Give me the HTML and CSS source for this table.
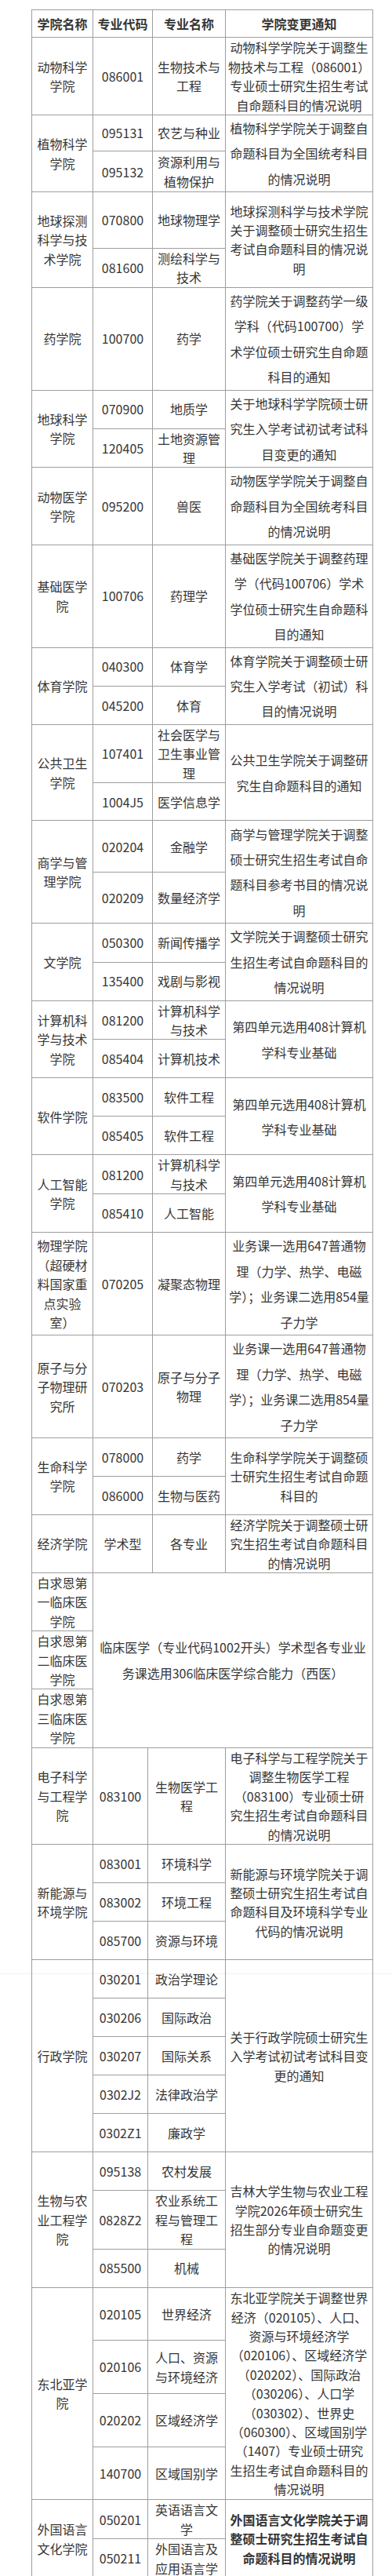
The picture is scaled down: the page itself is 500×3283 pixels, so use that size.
FILE: index.html
```html
<!DOCTYPE html>
<html lang="zh-CN">
<head>
<meta charset="utf-8">
<title>学院变更通知</title>
<link rel="stylesheet" href="styles.css">
</head>
<body>
<div class="page">
<table class="grid t1">
<colgroup><col class="w1"><col class="w2"><col class="w3"><col class="w4"></colgroup>
<thead>
<tr class="h35"><th>学院名称</th><th>专业代码</th><th>专业名称</th><th>学院变更通知</th></tr>
</thead>
<tbody>
<tr class="h98"><td>动物科学<br>学院</td><td>086001</td><td>生物技术与<br>工程</td><td>动物科学学院关于调整生<br>物技术与工程（086001）<br>专业硕士研究生招生考试<br>自命题科目的情况说明</td></tr>
<tr class="h46"><td rowspan="2">植物科学<br>学院</td><td>095131</td><td>农艺与种业</td><td rowspan="2" class="loose">植物科学学院关于调整自<br>命题科目为全国统考科目<br>的情况说明</td></tr>
<tr class="h52"><td>095132</td><td>资源利用与<br>植物保护</td></tr>
<tr class="h71"><td rowspan="2">地球探测<br>科学与技<br>术学院</td><td>070800</td><td>地球物理学</td><td rowspan="2">地球探测科学与技术学院<br>关于调整硕士研究生招生<br>考试自命题科目的情况说<br>明</td></tr>
<tr class="h49"><td>081600</td><td>测绘科学与<br>技术</td></tr>
<tr class="h131"><td>药学院</td><td>100700</td><td>药学</td><td class="loose">药学院关于调整药学一级<br>学科（代码100700）学<br>术学位硕士研究生自命题<br>科目的通知</td></tr>
<tr class="h49"><td rowspan="2">地球科学<br>学院</td><td>070900</td><td>地质学</td><td rowspan="2" class="loose">关于地球科学学院硕士研<br>究生入学考试初试考试科<br>目变更的通知</td></tr>
<tr class="h49"><td>120405</td><td>土地资源管<br>理</td></tr>
<tr class="h98"><td>动物医学<br>学院</td><td>095200</td><td>兽医</td><td class="loose">动物医学学院关于调整自<br>命题科目为全国统考科目<br>的情况说明</td></tr>
<tr class="h131"><td>基础医学<br>院</td><td>100706</td><td>药理学</td><td class="loose">基础医学院关于调整药理<br>学（代码100706）学术<br>学位硕士研究生自命题科<br>目的通知</td></tr>
<tr class="h49"><td rowspan="2">体育学院</td><td>040300</td><td>体育学</td><td rowspan="2" class="loose">体育学院关于调整硕士研<br>究生入学考试（初试）科<br>目的情况说明</td></tr>
<tr class="h49"><td>045200</td><td>体育</td></tr>
<tr class="h74"><td rowspan="2">公共卫生<br>学院</td><td>107401</td><td>社会医学与<br>卫生事业管<br>理</td><td rowspan="2" class="loose">公共卫生学院关于调整研<br>究生自命题科目的通知</td></tr>
<tr class="h48"><td>1004J5</td><td>医学信息学</td></tr>
<tr class="h65"><td rowspan="2">商学与管<br>理学院</td><td>020204</td><td>金融学</td><td rowspan="2" class="loose">商学与管理学院关于调整<br>硕士研究生招生考试自命<br>题科目参考书目的情况说<br>明</td></tr>
<tr class="h65"><td>020209</td><td>数量经济学</td></tr>
<tr class="h49"><td rowspan="2">文学院</td><td>050300</td><td>新闻传播学</td><td rowspan="2" class="loose">文学院关于调整硕士研究<br>生招生考试自命题科目的<br>情况说明</td></tr>
<tr class="h49"><td>135400</td><td>戏剧与影视</td></tr>
<tr class="h49"><td rowspan="2">计算机科<br>学与技术<br>学院</td><td>081200</td><td>计算机科学<br>与技术</td><td rowspan="2" class="loose">第四单元选用408计算机<br>学科专业基础</td></tr>
<tr class="h49"><td>085404</td><td>计算机技术</td></tr>
<tr class="h49"><td rowspan="2">软件学院</td><td>083500</td><td>软件工程</td><td rowspan="2" class="loose">第四单元选用408计算机<br>学科专业基础</td></tr>
<tr class="h49"><td>085405</td><td>软件工程</td></tr>
<tr class="h49"><td rowspan="2">人工智能<br>学院</td><td>081200</td><td>计算机科学<br>与技术</td><td rowspan="2" class="loose">第四单元选用408计算机<br>学科专业基础</td></tr>
<tr class="h49"><td>085410</td><td>人工智能</td></tr>
<tr class="h131"><td>物理学院<br>（超硬材<br>料国家重<br>点实验<br>室）</td><td>070205</td><td>凝聚态物理</td><td class="loose">业务课一选用647普通物<br>理（力学、热学、电磁<br>学）；业务课二选用854量<br>子力学</td></tr>
<tr class="h131"><td>原子与分<br>子物理研<br>究所</td><td>070203</td><td>原子与分子<br>物理</td><td class="loose">业务课一选用647普通物<br>理（力学、热学、电磁<br>学）；业务课二选用854量<br>子力学</td></tr>
<tr class="h49"><td rowspan="2">生命科学<br>学院</td><td>078000</td><td>药学</td><td rowspan="2">生命科学学院关于调整硕<br>士研究生招生考试自命题<br>科目的</td></tr>
<tr class="h48"><td>086000</td><td>生物与医药</td></tr>
<tr class="h74"><td>经济学院</td><td>学术型</td><td>各专业</td><td>经济学院关于调整硕士研<br>究生招生考试自命题科目<br>的情况说明</td></tr>
<tr class="h74"><td>白求恩第<br>一临床医<br>学院</td><td colspan="3" rowspan="3" class="loose">临床医学（专业代码1002开头）学术型各专业业<br>务课选用306临床医学综合能力（西医）</td></tr>
<tr class="h74"><td>白求恩第<br>二临床医<br>学院</td></tr>
<tr class="h74"><td>白求恩第<br>三临床医<br>学院</td></tr>
</tbody>
</table>
<table class="grid t2">
<colgroup><col class="w1"><col class="w2"><col class="w3"><col class="w4"></colgroup>
<tbody>
<tr class="h123"><td>电子科学<br>与工程学<br>院</td><td>083100</td><td>生物医学工<br>程</td><td>电子科学与工程学院关于<br>调整生物医学工程<br>（083100）专业硕士研<br>究生招生考试自命题科目<br>的情况说明</td></tr>
<tr class="h49"><td rowspan="3">新能源与<br>环境学院</td><td>083001</td><td>环境科学</td><td rowspan="3">新能源与环境学院关于调<br>整硕士研究生招生考试自<br>命题科目及环境科学专业<br>代码的情况说明</td></tr>
<tr class="h49"><td>083002</td><td>环境工程</td></tr>
<tr class="h49"><td>085700</td><td>资源与环境</td></tr>
<tr class="h49"><td rowspan="5">行政学院</td><td>030201</td><td>政治学理论</td><td rowspan="5">关于行政学院硕士研究生<br>入学考试初试考试科目变<br>更的通知</td></tr>
<tr class="h49"><td>030206</td><td>国际政治</td></tr>
<tr class="h49"><td>030207</td><td>国际关系</td></tr>
<tr class="h49"><td>0302J2</td><td>法律政治学</td></tr>
<tr class="h49"><td>0302Z1</td><td>廉政学</td></tr>
<tr class="h49"><td rowspan="3">生物与农<br>业工程学<br>院</td><td>095138</td><td>农村发展</td><td rowspan="3">吉林大学生物与农业工程<br>学院2026年硕士研究生<br>招生部分专业自命题变更<br>的情况说明</td></tr>
<tr class="h74"><td>0828Z2</td><td>农业系统工<br>程与管理工<br>程</td></tr>
<tr class="h49"><td>085500</td><td>机械</td></tr>
<tr class="h67"><td rowspan="4">东北亚学<br>院</td><td>020105</td><td>世界经济</td><td rowspan="4">东北亚学院关于调整世界<br>经济（020105）、人口、<br>资源与环境经济学<br>（020106）、区域经济学<br>（020202）、国际政治<br>（030206）、人口学<br>（030302）、世界史<br>（060300）、区域国别学<br>（1407）专业硕士研究<br>生招生考试自命题科目的<br>情况说明</td></tr>
<tr class="h67"><td>020106</td><td>人口、资源<br>与环境经济</td></tr>
<tr class="h67"><td>020202</td><td>区域经济学</td></tr>
<tr class="h67"><td>140700</td><td>区域国别学</td></tr>
<tr class="h49"><td rowspan="2">外国语言<br>文化学院</td><td>050201</td><td>英语语言文<br>学</td><td rowspan="2" class="strong">外国语言文化学院关于调<br>整硕士研究生招生考试自<br>命题科目的情况说明</td></tr>
<tr class="h49"><td>050211</td><td>外国语言及<br>应用语言学</td></tr>
</tbody>
</table>
<div class="seam"></div>
</div>
</body>
</html>
```

FILE: styles.css
```css
html, body {
  margin: 0;
  padding: 0;
  background: #ffffff;
}

body {
  font-family: "Noto Sans CJK SC", "Noto Sans", sans-serif;
  font-size: 16px;
  color: #363636;
}

.page {
  position: relative;
  padding: 12px 0 0 40px;
  height: 3271px;
}

.grid {
  border-collapse: collapse;
  table-layout: fixed;
  width: 435px;
}

.grid td,
.grid th {
  border: 1px solid #9e9e9e;
  padding: 0 3px;
  text-align: center;
  vertical-align: middle;
  white-space: nowrap;
  line-height: 24.4px;
  font-weight: 400;
}

.grid th {
  font-weight: 700;
}

.grid .loose {
  line-height: 32.4px;
}

.grid .strong {
  font-weight: 700;
}

.t2 tr:first-child td {
  border-top: 0;
}

.grid col.w1 { width: 78px; }
.grid col.w2 { width: 76px; }
.grid col.w3 { width: 93px; }
.grid col.w4 { width: 188px; }

.t2 col.w2 { width: 70px; }
.t2 col.w3 { width: 99px; }

tr.h35 { height: 35.4px; }
tr.h46 { height: 46.3px; }
tr.h48 { height: 48.4px; }
tr.h49 { height: 49px; }
tr.h52 { height: 52px; }
tr.h65 { height: 65.5px; }
tr.h67 { height: 67.7px; }
tr.h71 { height: 71.4px; }
tr.h74 { height: 74.2px; }
tr.h98 { height: 98.3px; }
tr.h123 { height: 123.3px; }
tr.h131 { height: 131px; }

.seam {
  position: absolute;
  left: 0;
  right: 0;
  top: 2515px;
  height: 1px;
  background: rgba(0, 0, 0, 0.06);
}
```
